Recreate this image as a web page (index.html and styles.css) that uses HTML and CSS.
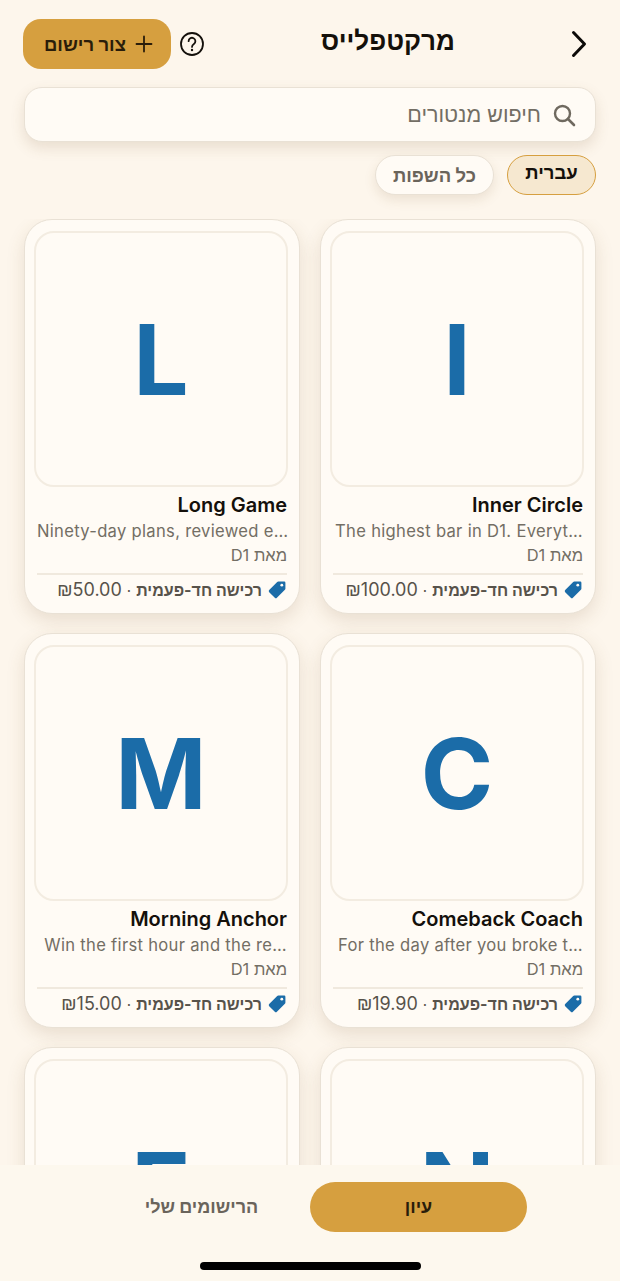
FILE: index.html
```html
<!DOCTYPE html>
<html lang="he" dir="rtl">
<head>
    <meta charset="UTF-8">
    <meta name="viewport" content="width=device-width, initial-scale=1.0">
    <title>מרקטפלייס</title>
    <link rel="stylesheet" href="styles.css">
</head>
<body>
<div class="page">

    <header class="topBar">
        <svg class="backIcon" width="20" height="30" viewBox="0 0 20 30"><path d="M3.5 3.5L14.5 15 3.5 26.5" fill="none" stroke="#0c0a08" stroke-width="3" stroke-linecap="round" stroke-linejoin="round"/></svg>
        <h1 class="title">מרקטפלייס</h1>
        <div class="topActions">
            <svg class="helpIcon" width="26" height="26" viewBox="0 0 26 26"><circle cx="13" cy="13" r="11" fill="none" stroke="#14100b" stroke-width="1.8"/><path d="M9.6 10.2a3.4 3.4 0 1 1 5.3 2.8c-1.2.8-1.9 1.4-1.9 2.9" fill="none" stroke="#14100b" stroke-width="1.8" stroke-linecap="round"/><circle cx="13" cy="19" r="1.2" fill="#14100b"/></svg>
            <button class="createBtn">
                <svg width="20" height="20" viewBox="0 0 20 20"><path d="M10 2.5v15M2.5 10h15" stroke="#2a1d0a" stroke-width="1.8" stroke-linecap="round"/></svg>
                <span>צור רישום</span>
            </button>
        </div>
    </header>

    <div class="searchBox">
        <svg width="26" height="26" viewBox="0 0 26 26"><circle cx="11.5" cy="11.5" r="7.5" fill="none" stroke="#6f695f" stroke-width="2.4"/><path d="M17 17l6 6" stroke="#6f695f" stroke-width="2.6" stroke-linecap="round"/></svg>
        <span>חיפוש מנטורים</span>
    </div>

    <div class="filters">
        <span class="chip chipActive">עברית</span>
        <span class="chip">כל השפות</span>
    </div>

    <main class="listing">
        <div class="grid">
            <article class="card">
                <div class="thumb">I</div>
                <h2 class="name" dir="ltr">Inner Circle</h2>
                <p class="desc" dir="ltr">The highest bar in D1. Everyt…</p>
                <p class="by">מאת D1</p>
                <div class="priceRow">
                    <svg class="tag" width="20" height="20" viewBox="0 0 20 20"><path d="M11.3 1.6h6a1.1 1.1 0 0 1 1.1 1.1v6a1.6 1.6 0 0 1-.5 1.1l-8 8a1.5 1.5 0 0 1-2.1 0l-5.6-5.6a1.5 1.5 0 0 1 0-2.1l8-8a1.6 1.6 0 0 1 1.1-.5z" fill="#1b6ca8"/><circle cx="14.8" cy="5.2" r="1.4" fill="#fffbf5"/></svg>
                    <span class="kind">רכישה חד-פעמית</span>
                    <span class="dot">·</span>
                    <bdi class="price"><span class="shekel">₪</span>100.00</bdi>
                </div>
            </article>
            <article class="card">
                <div class="thumb">L</div>
                <h2 class="name" dir="ltr">Long Game</h2>
                <p class="desc" dir="ltr">Ninety-day plans, reviewed e…</p>
                <p class="by">מאת D1</p>
                <div class="priceRow">
                    <svg class="tag" width="20" height="20" viewBox="0 0 20 20"><path d="M11.3 1.6h6a1.1 1.1 0 0 1 1.1 1.1v6a1.6 1.6 0 0 1-.5 1.1l-8 8a1.5 1.5 0 0 1-2.1 0l-5.6-5.6a1.5 1.5 0 0 1 0-2.1l8-8a1.6 1.6 0 0 1 1.1-.5z" fill="#1b6ca8"/><circle cx="14.8" cy="5.2" r="1.4" fill="#fffbf5"/></svg>
                    <span class="kind">רכישה חד-פעמית</span>
                    <span class="dot">·</span>
                    <bdi class="price"><span class="shekel">₪</span>50.00</bdi>
                </div>
            </article>
            <article class="card">
                <div class="thumb">C</div>
                <h2 class="name" dir="ltr">Comeback Coach</h2>
                <p class="desc" dir="ltr">For the day after you broke t…</p>
                <p class="by">מאת D1</p>
                <div class="priceRow">
                    <svg class="tag" width="20" height="20" viewBox="0 0 20 20"><path d="M11.3 1.6h6a1.1 1.1 0 0 1 1.1 1.1v6a1.6 1.6 0 0 1-.5 1.1l-8 8a1.5 1.5 0 0 1-2.1 0l-5.6-5.6a1.5 1.5 0 0 1 0-2.1l8-8a1.6 1.6 0 0 1 1.1-.5z" fill="#1b6ca8"/><circle cx="14.8" cy="5.2" r="1.4" fill="#fffbf5"/></svg>
                    <span class="kind">רכישה חד-פעמית</span>
                    <span class="dot">·</span>
                    <bdi class="price"><span class="shekel">₪</span>19.90</bdi>
                </div>
            </article>
            <article class="card">
                <div class="thumb">M</div>
                <h2 class="name" dir="ltr">Morning Anchor</h2>
                <p class="desc" dir="ltr">Win the first hour and the re…</p>
                <p class="by">מאת D1</p>
                <div class="priceRow">
                    <svg class="tag" width="20" height="20" viewBox="0 0 20 20"><path d="M11.3 1.6h6a1.1 1.1 0 0 1 1.1 1.1v6a1.6 1.6 0 0 1-.5 1.1l-8 8a1.5 1.5 0 0 1-2.1 0l-5.6-5.6a1.5 1.5 0 0 1 0-2.1l8-8a1.6 1.6 0 0 1 1.1-.5z" fill="#1b6ca8"/><circle cx="14.8" cy="5.2" r="1.4" fill="#fffbf5"/></svg>
                    <span class="kind">רכישה חד-פעמית</span>
                    <span class="dot">·</span>
                    <bdi class="price"><span class="shekel">₪</span>15.00</bdi>
                </div>
            </article>
            <article class="card">
                <div class="thumb">N</div>
            </article>
            <article class="card">
                <div class="thumb">E</div>
            </article>
        </div>
    </main>

    <nav class="bottomBar">
        <div class="tabs">
            <button class="tab tabActive">עיון</button>
            <button class="tab">הרישומים שלי</button>
        </div>
        <div class="homeBar"></div>
    </nav>

</div>
</body>
</html>
```

FILE: styles.css
```css
*{
    margin: 0;
    padding: 0;
    box-sizing: border-box;
}

body{
    background: #fdf6ec;
    font-family: Inter, "Liberation Sans", sans-serif;
    color: #14100b;
}

.page{
    width: 620px;
    height: 1281px;
    display: flex;
    flex-direction: column;
    overflow: hidden;
}

.topBar{
    height: 50px;
    margin: 19px 24px 18px 23px;
    position: relative;
    display: flex;
    align-items: center;
    justify-content: space-between;
}

.backIcon{
    margin-right: 6px;
}

.title{
    position: absolute;
    top: 4px;
    left: 298px;
    font-size: 26px;
    line-height: 36px;
    font-weight: 700;
}

.topActions{
    display: flex;
    align-items: center;
    gap: 8px;
}

.createBtn{
    width: 148px;
    height: 50px;
    padding-left: 4px;
    display: flex;
    align-items: center;
    justify-content: center;
    gap: 8px;
    background: #d69f3f;
    border: none;
    border-radius: 18px;
    font-family: inherit;
    font-size: 18.5px;
    font-weight: 700;
    color: #2a1d0a;
}

.searchBox{
    height: 55px;
    margin: 0 24px 13px;
    padding: 0 18px 0 18px;
    display: flex;
    align-items: center;
    gap: 10px;
    background: #fffbf5;
    border: 1px solid #e9e1d5;
    border-radius: 18px;
    box-shadow: 0 6px 14px rgba(120, 90, 50, 0.15);
    font-size: 21.5px;
    color: #736e64;
}

.filters{
    display: flex;
    gap: 13px;
    margin: 0 24px 24px;
}

.chip{
    width: 119px;
    height: 40px;
    display: flex;
    align-items: center;
    justify-content: center;
    background: #fffbf5;
    border: 1px solid #e9e1d5;
    border-radius: 20px;
    box-shadow: 0 5px 12px rgba(120, 90, 50, 0.13);
    font-size: 18.5px;
    font-weight: 700;
    color: #6a645b;
}

.chipActive{
    width: 89px;
    padding-bottom: 6px;
    background: #f6e8d0;
    border-color: #d69f3f;
    box-shadow: none;
    color: #14100b;
}

.listing{
    flex: 1;
    min-height: 0;
    overflow: hidden;
    padding: 0 24px;
}

.grid{
    display: grid;
    grid-template-columns: 276px 276px;
    column-gap: 20px;
    row-gap: 19.5px;
}

.card{
    height: 394.5px;
    padding: 11px 12px 0;
    background: #fffbf5;
    border: 1px solid #e9e1d5;
    border-radius: 28px;
    box-shadow: 0 7px 18px rgba(120, 90, 50, 0.15);
}

.thumb{
    height: 256px;
    margin: 0 -1px 0 -3px;
    display: flex;
    align-items: center;
    justify-content: center;
    border: 2px solid #f3ece1;
    border-radius: 20px;
    font-size: 98px;
    font-weight: 700;
    color: #1b6ca8;
}

.name{
    margin-top: 6px;
    font-size: 20px;
    line-height: 24px;
    font-weight: 600;
    text-align: right;
}

.desc{
    margin-top: 2px;
    font-size: 16.6px;
    line-height: 24px;
    letter-spacing: 0.3px;
    color: #736e64;
    text-align: right;
    white-space: nowrap;
}

.by{
    font-size: 16.5px;
    line-height: 24px;
    color: #736e64;
}

.priceRow{
    margin-top: 6px;
    padding-top: 4px;
    display: flex;
    align-items: center;
    gap: 5px;
    border-top: 2px solid #f0e9de;
}

.kind{
    font-size: 16px;
    font-weight: 700;
    color: #57524a;
}

.dot{
    font-size: 15px;
    color: #57524a;
}

.price{
    font-size: 18px;
    color: #57524a;
}

.shekel{
    font-family: "Liberation Sans", sans-serif;
}

.bottomBar{
    height: 116px;
    flex-shrink: 0;
    position: relative;
    background: #fdf8ee;
}

.tabs{
    display: flex;
    margin: 17px 93px 0 0;
}

.tab{
    width: 217px;
    height: 50px;
    background: none;
    border: none;
    border-radius: 25px;
    font-family: inherit;
    font-size: 18px;
    font-weight: 700;
    color: #6a645b;
}

.tabActive{
    background: #d69f3f;
    color: #2a1d0a;
}

.homeBar{
    position: absolute;
    left: 200px;
    bottom: 11px;
    width: 221px;
    height: 8px;
    background: #000;
    border-radius: 4px;
}
```
